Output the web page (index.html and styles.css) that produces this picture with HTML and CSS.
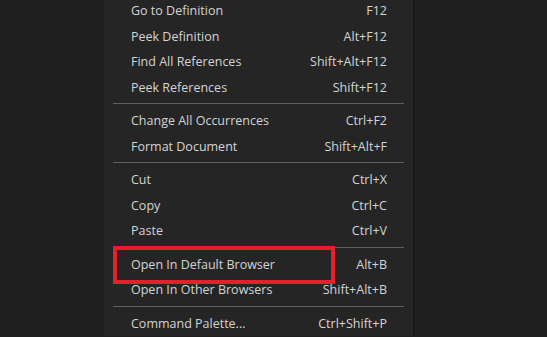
FILE: index.html
```html
<!DOCTYPE html>
<html lang="en">
<head>
  <meta charset="UTF-8">
  <title>Editor context menu</title>
  <link rel="stylesheet" href="styles.css">
</head>
<body>
  <div class="menu">
    <div class="item"><span>Go to Definition</span><span class="key">F12</span></div>
    <div class="item"><span>Peek Definition</span><span class="key">Alt+F12</span></div>
    <div class="item"><span>Find All References</span><span class="key">Shift+Alt+F12</span></div>
    <div class="item"><span>Peek References</span><span class="key">Shift+F12</span></div>
    <div class="sep"></div>
    <div class="item"><span>Change All Occurrences</span><span class="key">Ctrl+F2</span></div>
    <div class="item"><span>Format Document</span><span class="key">Shift+Alt+F</span></div>
    <div class="sep"></div>
    <div class="item"><span>Cut</span><span class="key">Ctrl+X</span></div>
    <div class="item"><span>Copy</span><span class="key">Ctrl+C</span></div>
    <div class="item"><span>Paste</span><span class="key">Ctrl+V</span></div>
    <div class="sep"></div>
    <div class="item marked">
      <span>Open In Default Browser</span><span class="key">Alt+B</span>
      <!-- red highlight box drawn over the item -->
      <div class="highlight"></div>
    </div>
    <div class="item"><span>Open In Other Browsers</span><span class="key">Shift+Alt+B</span></div>
    <div class="sep"></div>
    <div class="item"><span>Command Palette...</span><span class="key">Ctrl+Shift+P</span></div>
  </div>
</body>
</html>
```

FILE: styles.css
```css
/* page background, like the editor area */
body {
  margin: 0;
  background-color: #1e1e1e;
  font-family: 'Open Sans', 'Noto Sans', sans-serif;
  font-size: 12.5px;
  color: #d4d4d4;
  overflow: hidden;
}
/* context menu */
.menu {
  width: 309px;
  margin: -2px 0 0 104px;
  background-color: #252526;
  box-shadow: 1px 0 0 #1b1b1c;
}
.item {
  position: relative;
  display: flex;
  justify-content: space-between;
  align-items: center;
  height: 25.5px;
  padding: 0 26px 0 27px;
}
.sep {
  height: 1px;
  margin: 3px 9px 4px;
  background-color: #5f5f5f;
}
/* red box round "Open In Default Browser" */
.highlight {
  position: absolute;
  left: 9px;
  top: -6px;
  width: 214px;
  height: 30px;
  border: 4px solid #e3202b;
}
```
